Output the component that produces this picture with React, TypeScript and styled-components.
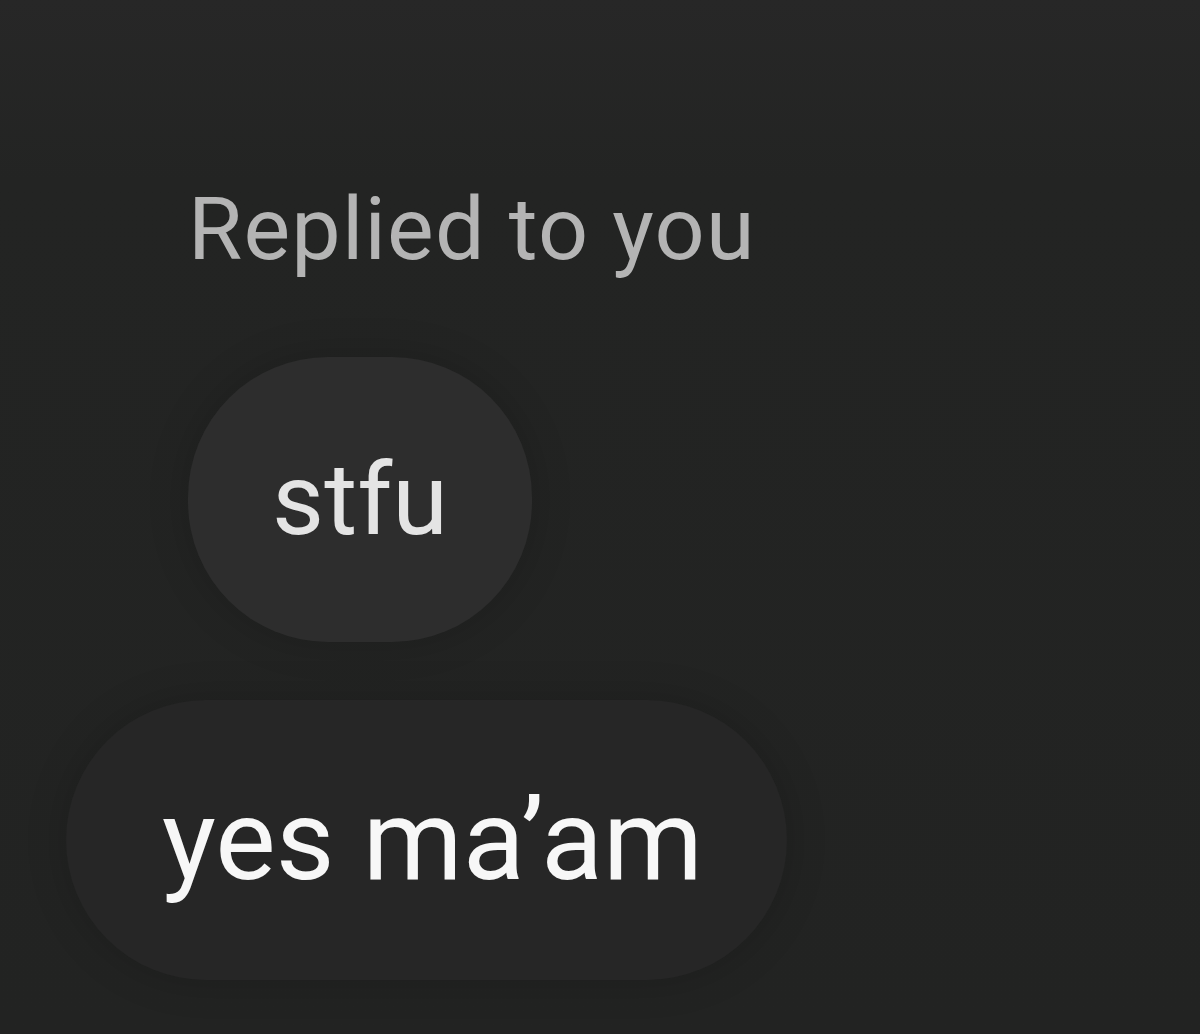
import React from 'react';
import styled, { createGlobalStyle } from 'styled-components';

const GlobalStyle = createGlobalStyle`
  html, body {
    margin: 0;
    padding: 0;
    background: #222322;
  }
  body {
    font-family: Roboto, 'Liberation Sans', Arial, sans-serif;
  }
`;

const Screen = styled.div`
  width: 1200px;
  height: 1034px;
  overflow: hidden;
  background: linear-gradient(180deg, #272727 0px, #232423 180px, #222322 100%);
  display: flex;
  flex-direction: column;
`;

const ReplyBlock = styled.div`
  display: flex;
  flex-direction: column;
  align-items: flex-start;
  padding: 177px 0 0 188px;
`;

const ReplyLabel = styled.div`
  color: #b4b4b4;
  font-size: 88px;
  line-height: 103px;
  letter-spacing: 1.2px;
`;

const Bubble = styled.div<{ $tone: 'quoted' | 'own'; $size: number }>`
  display: flex;
  align-items: center;
  justify-content: center;
  box-sizing: border-box;
  border-radius: 140px;
  font-size: ${({ $size }) => $size}px;
  line-height: 1;
  background: ${({ $tone }) => ($tone === 'quoted' ? '#2d2d2d' : '#262626')};
  color: ${({ $tone }) => ($tone === 'quoted' ? '#e4e4e4' : '#f7f7f7')};
  box-shadow: 0 0 40px rgba(0, 0, 0, 0.18);
`;

const QuotedBubble = styled(Bubble)`
  margin: 77px 0 0 0;
  width: 344px;
  height: 285px;
`;

const OwnRow = styled.div`
  display: flex;
  padding: 58px 0 0 66px;
`;

const OwnBubble = styled(Bubble)`
  height: 280px;
  padding: 0 84px 0 96px;
  justify-content: flex-start;
`;

export default function App() {
  return (
    <>
      <GlobalStyle />
      <Screen>
        <ReplyBlock>
          <ReplyLabel>Replied to you</ReplyLabel>
          <QuotedBubble $tone="quoted" $size={101}>
            stfu
          </QuotedBubble>
        </ReplyBlock>
        <OwnRow>
          <OwnBubble $tone="own" $size={114}>
            yes ma’am
          </OwnBubble>
        </OwnRow>
      </Screen>
    </>
  );
}
